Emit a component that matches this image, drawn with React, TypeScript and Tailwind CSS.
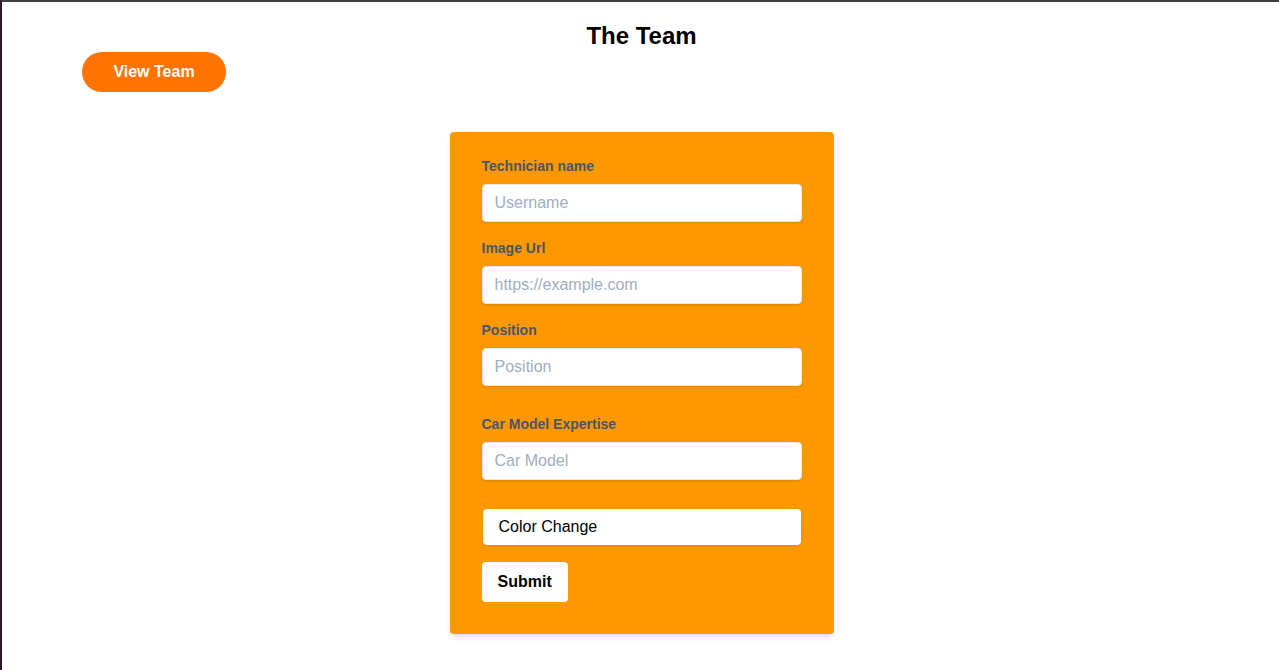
import React from "react";

const inputCls =
  "shadow appearance-none border border-gray-200 rounded w-full py-2 px-3 text-[#4a5568] leading-tight bg-white placeholder:text-[#a0aec0] outline-none";
const labelCls = "block text-[#4a5568] text-sm font-bold mb-2";

export default function App() {
  const font = { fontFamily: '"Liberation Sans", Arial, sans-serif' };
  return (
    <div
      className="min-h-[670px] bg-white border-t-2 border-l-2 border-t-[#3d3d3d] border-l-[#2b1a2b]"
      style={font}
    >
      <h1 className="pt-[18px] pl-0.5 text-center text-2xl font-bold text-black leading-8">The Team</h1>
      <div className="ml-20">
        <button className="h-10 w-36 rounded-full bg-[#ff7300] text-white font-bold text-base">
          View Team
        </button>
      </div>
      <div className="mt-10 flex justify-center pl-0.5">
        <form className="w-96 bg-[#fd9800] rounded shadow-md px-8 pt-6 pb-8">
          <div className="mb-4">
            <label className={labelCls}>Technician name</label>
            <input className={inputCls} placeholder="Username" />
          </div>
          <div className="mb-4">
            <label className={labelCls}>Image Url</label>
            <input className={inputCls} placeholder="https://example.com" />
          </div>
          <div className="mb-7">
            <label className={labelCls}>Position</label>
            <input className={inputCls} placeholder="Position" />
          </div>
          <div className="mb-[29px]">
            <label className={labelCls}>Car Model Expertise</label>
            <input className={inputCls} placeholder="Car Model" />
          </div>
          <div className="px-px mb-[17px]">
            <button
              type="button"
              className="w-full h-9 rounded bg-white shadow text-left pl-4 text-black text-base"
            >
              Color Change
            </button>
          </div>
          <button type="button" className="bg-white rounded py-2 px-4 font-bold text-black text-base leading-6">
            Submit
          </button>
        </form>
      </div>
    </div>
  );
}
